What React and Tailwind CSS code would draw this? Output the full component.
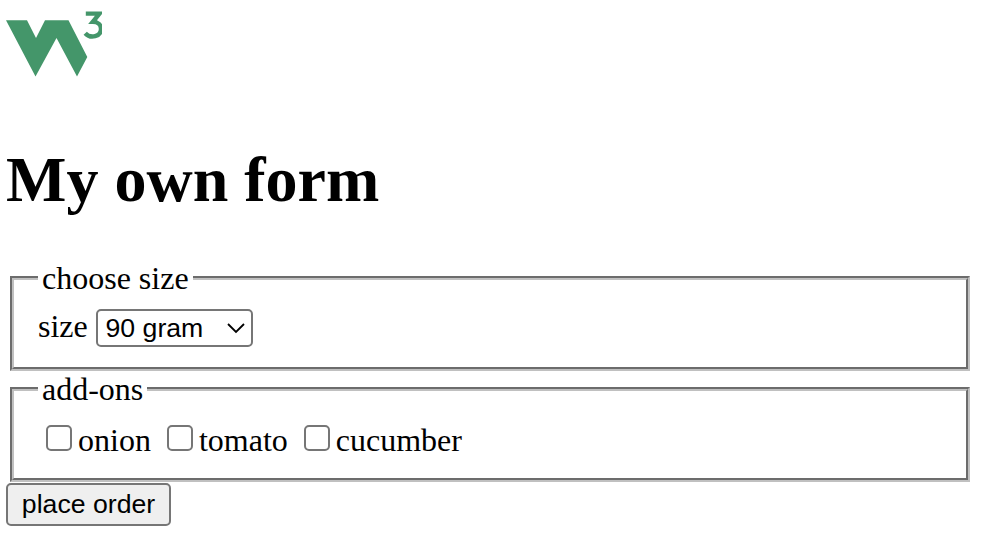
function Logo() {
  return (
    <svg className="block h-[84px] w-24" viewBox="0 0 96 84" fill="none" aria-label="W3">
      <path d="M0 20.2H21L30 38L39 20.2H62.5L81.3 57L71 76.5L50.5 38L29.5 76.5Z" fill="#44966a" />
      <path d="M79.8 13.6H93.5L86.8 21.8C92 21.8 95 24.8 95 29C95 36.6 84.5 39.2 79.2 33.2" stroke="#44966a" strokeWidth="4.4" />
    </svg>
  );
}

function Group({ title, children }) {
  return (
    <fieldset className="mx-1 h-[111px] border-4 border-[#c0c0c0] px-6 [border-style:groove]">
      <legend className="px-1 leading-9">{title}</legend>
      {children}
    </fieldset>
  );
}

function Addon({ name }) {
  return (
    <label className="flex">
      <input
        type="checkbox"
        className="mt-[3px] mr-1.5 size-[26px] appearance-none rounded-[5px] border-2 border-[#767676] bg-white"
      />
      {name}
    </label>
  );
}

export default function App() {
  return (
    <form className="h-[542px] overflow-hidden bg-white pr-2 pl-1.5 font-['Liberation_Serif',serif] text-[32px] leading-9 text-black">
      <Logo />
      <h1 className="mt-[60px] mb-[45px] text-[64px] leading-[71px] font-bold">My own form</h1>
      <Group title="choose size">
        <div className="flex pt-[12px]">
          <label htmlFor="size" className="w-[58px]">size</label>
          <div className="relative mt-px h-[38px] w-[157px]">
            <select
              id="size"
              className="block h-full w-full appearance-none rounded-[5px] border-2 border-[#767676] bg-white pl-[7.5px] font-['Liberation_Sans',sans-serif] text-[26.67px] leading-[34px]"
            >
              <option>90 gram</option>
            </select>
            <svg className="pointer-events-none absolute top-[13px] right-[7px]" width="20" height="12" viewBox="0 0 20 12" fill="none">
              <path d="M2 2L10 10L18 2" stroke="#000" strokeWidth="1.8" />
            </svg>
          </div>
        </div>
      </Group>
      <Group title="add-ons">
        <div className="flex gap-4 pt-[15px] pl-2">
          <Addon name="onion" />
          <Addon name="tomato" />
          <Addon name="cucumber" />
        </div>
      </Group>
      <button
        type="button"
        className="mt-px block h-[43px] w-[165px] rounded-[5px] border-2 border-[#767676] bg-[#efefef] pb-px font-['Liberation_Sans',sans-serif] text-[26.67px] leading-[30px] whitespace-nowrap"
      >
        place order
      </button>
    </form>
  );
}
